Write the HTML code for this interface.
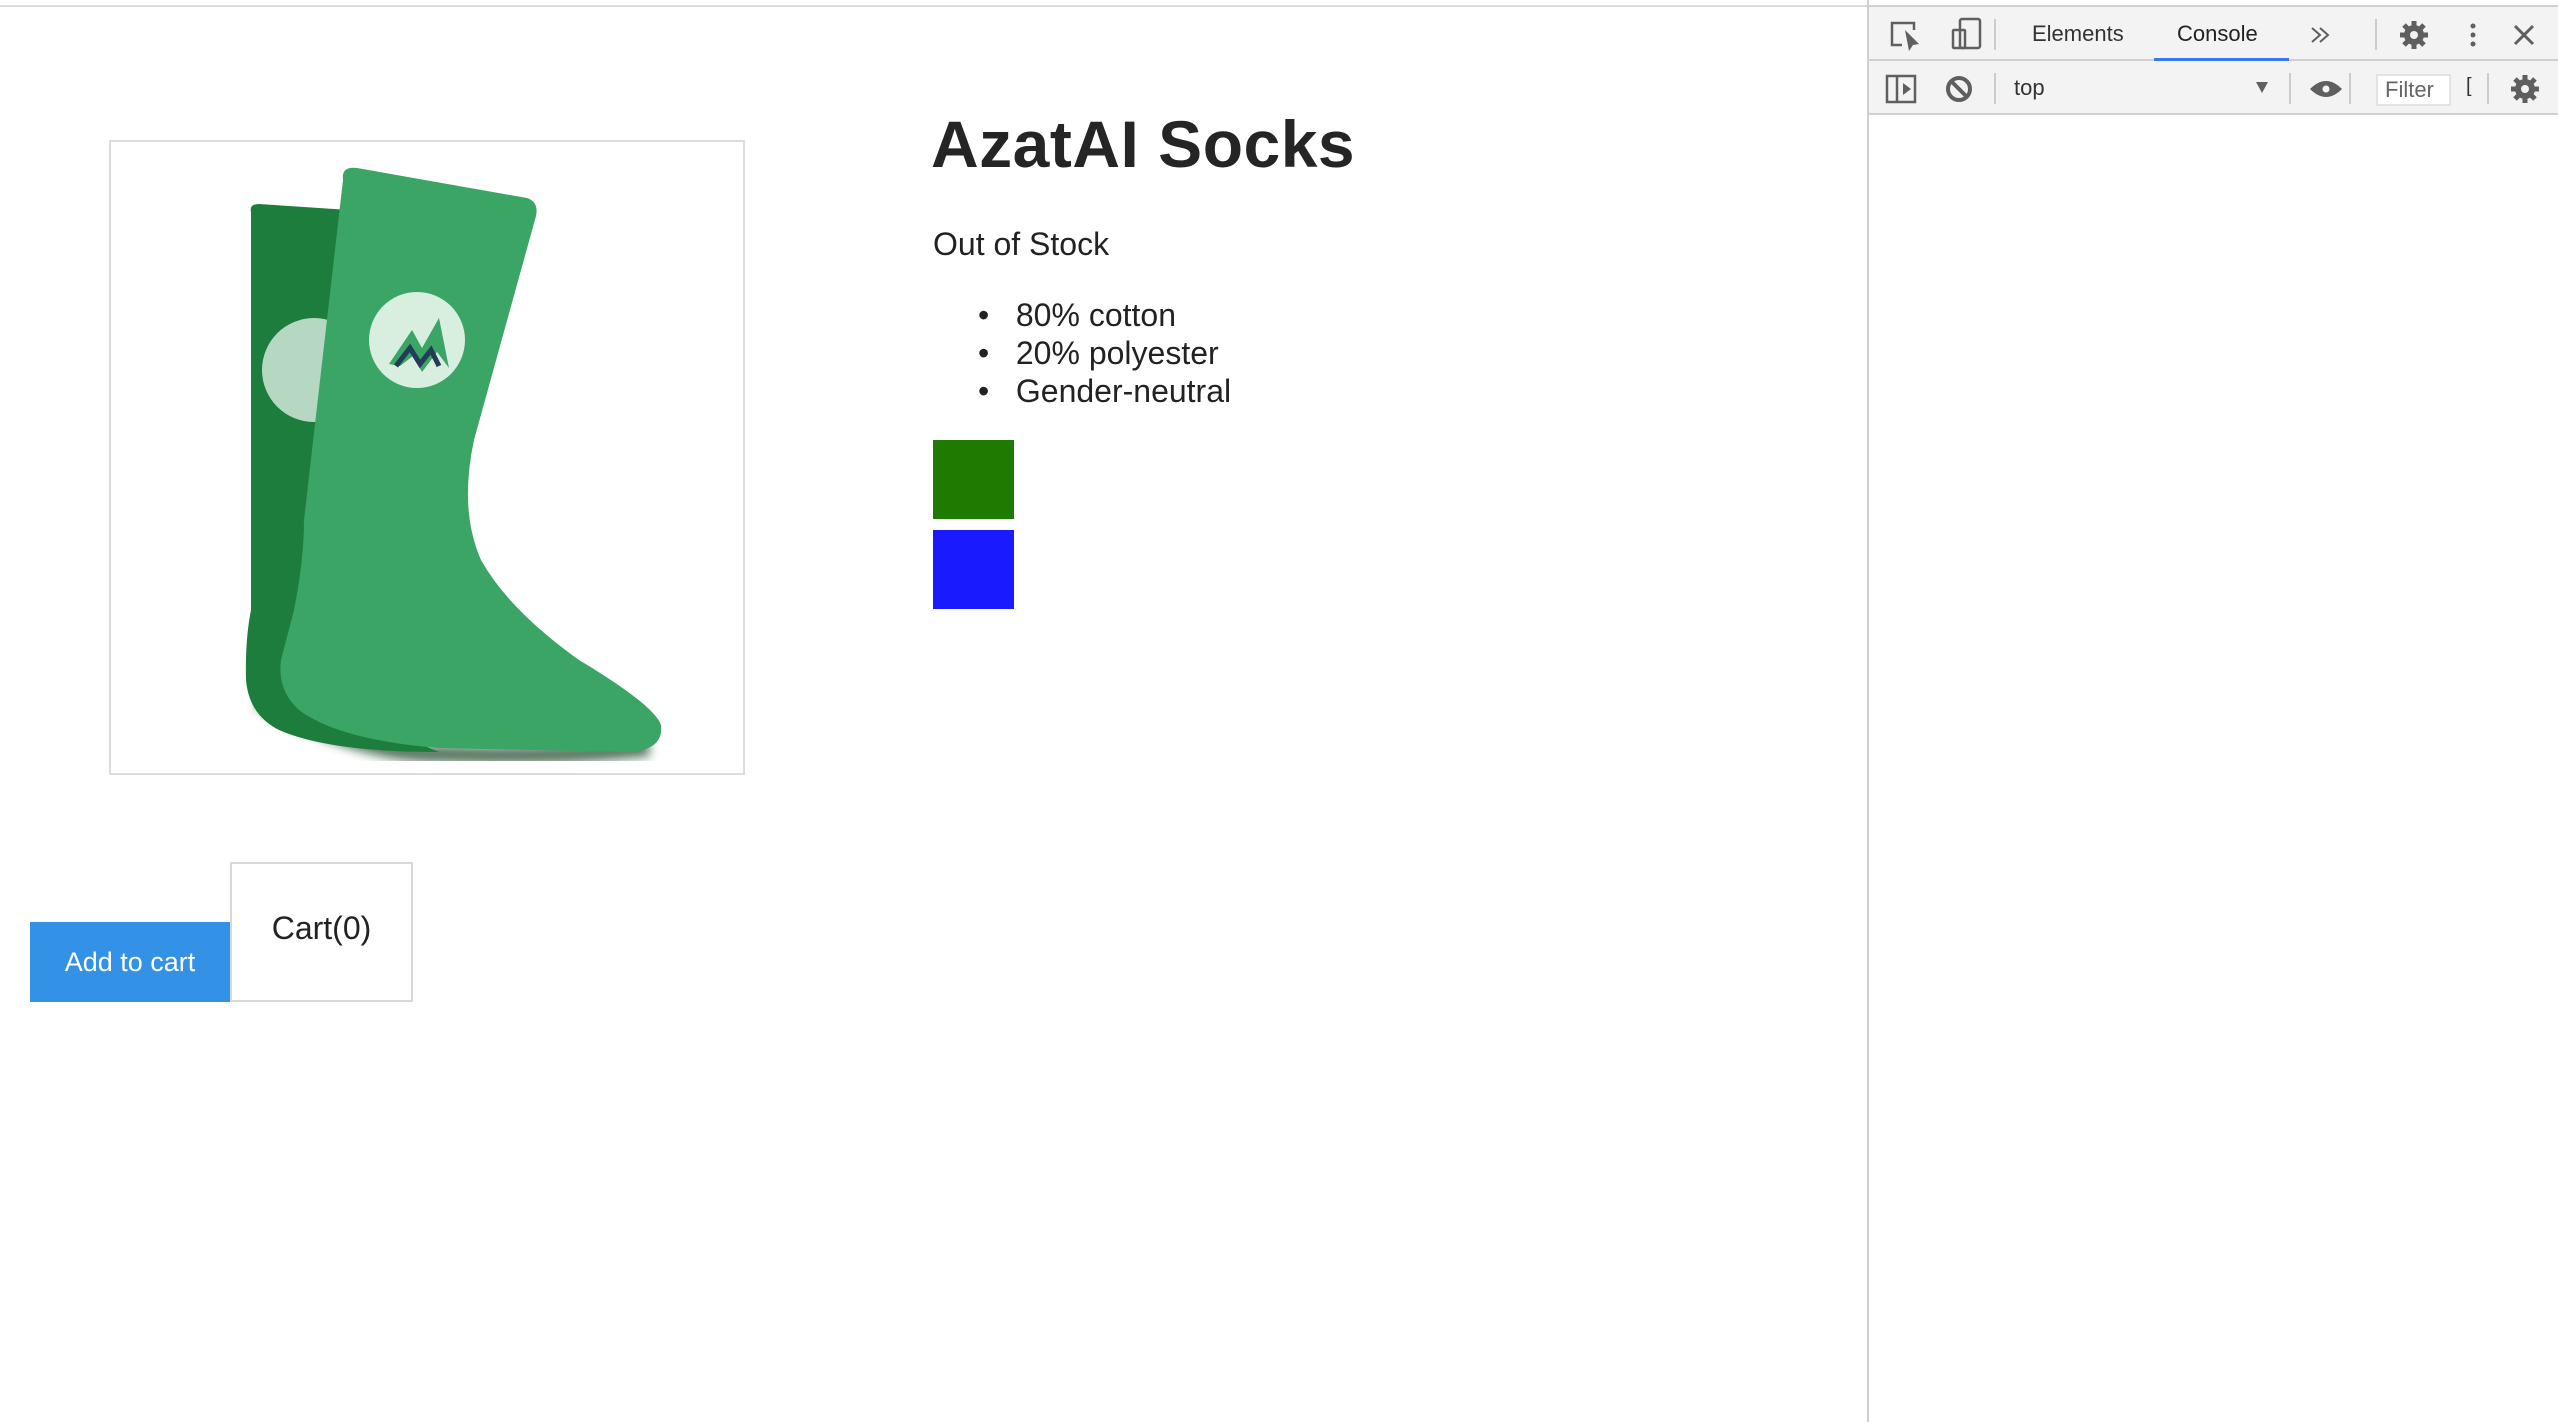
<!DOCTYPE html>
<html><head><meta charset="utf-8"><style>
body{margin:0;width:2558px;height:1422px;background:#fff;position:relative;overflow:hidden;font-family:"Liberation Sans",sans-serif;color:#222}
.a{position:absolute}
</style></head><body>
<div class="a" style="left:0;top:0;width:1869px;height:7px;border-bottom:2px solid #dcdcdc;box-sizing:border-box;background:#fff"></div>

<div class="a" style="left:109px;top:140px;width:636px;height:635px;border:2px solid #dadcdd;box-sizing:border-box;background:#fff"></div>
<svg class="a" style="left:109px;top:140px" width="636" height="635" viewBox="0 0 636 635">
<defs><filter id="s"><feGaussianBlur stdDeviation="5"/></filter></defs>
<path d="M150 560 Q250 615 330 614 Q460 618 540 608" stroke="#0b3a1b" stroke-width="16" fill="none" filter="url(#s)" opacity="0.7"/>
<path d="M142 72 Q140 64 150 64 L240 70 L220 560 Q300 600 330 612 Q220 612 170 590 Q140 575 137 540 Q136 500 142 470 Z" fill="#1d7d3c"/>
<circle cx="205" cy="230" r="52" fill="#c8e2d0" opacity="0.9"/>
<path d="M234 40 Q232 26 248 28 L418 58 Q430 62 427 76 L365 300 Q350 370 372 420 Q400 470 470 520 Q545 565 552 585 Q555 610 520 612 L330 608 Q230 600 190 570 Q168 550 172 520 L185 470 Q195 420 195 380 Z" fill="#3aa564"/>
<circle cx="308" cy="200" r="48" fill="#d8eedf"/>
<path d="M280 224 L303 190 L313 208 L330 178 L340 228 L328 212 L313 232 L304 216 L291 226 Z" fill="#3aa564"/>
<path d="M287 226 L301 208 L311 224 L322 210 L330 226" stroke="#253b5a" stroke-width="5" fill="none"/>
</svg>

<div class="a" style="left:931px;top:106px;font-size:66px;font-weight:bold;letter-spacing:0.5px;color:#252525;white-space:nowrap">AzatAI Socks</div>
<div class="a" style="left:933px;top:226px;font-size:32px;white-space:nowrap">Out of Stock</div>
<div class="a" style="left:978px;top:296px;font-size:32px;line-height:38px;white-space:nowrap">
<div>•&nbsp;&nbsp; 80% cotton</div><div>•&nbsp;&nbsp; 20% polyester</div><div>•&nbsp;&nbsp; Gender-neutral</div></div>
<div class="a" style="left:933px;top:440px;width:81px;height:79px;background:#1e7a00"></div>
<div class="a" style="left:933px;top:530px;width:81px;height:79px;background:#1a1aff"></div>

<div class="a" style="left:30px;top:922px;width:200px;height:80px;background:#3391e6;color:#fff;font-size:27px;line-height:80px;text-align:center">Add to cart</div>
<div class="a" style="left:230px;top:862px;width:183px;height:140px;border:2px solid #d6d9da;box-sizing:border-box;font-size:32px;line-height:128px;text-align:center;color:#222">Cart(0)</div>

<!-- devtools -->
<div class="a" style="left:1867px;top:0;width:691px;height:1422px;border-left:2px solid #d0d0d0;background:#fff"></div>
<div class="a" style="left:1869px;top:7px;width:689px;height:54px;background:#f3f3f3;border-bottom:2px solid #d0d0d0;box-sizing:border-box"></div>
<div class="a" style="left:1869px;top:61px;width:689px;height:54px;background:#f3f3f3;border-bottom:2px solid #d0d0d0;box-sizing:border-box"></div>
<div class="a" style="left:1869px;top:0;width:689px;height:7px;border-bottom:2px solid #d0d0d0;box-sizing:border-box"></div>
<svg class="a" style="left:1869px;top:0" width="689" height="120" viewBox="0 0 689 120" fill="none" stroke="#5f5f5f" stroke-width="2.5">
<path d="M33 45 H23 V23 H45 V30"/><path d="M36 30 L50 44 L44 45 L40 51 Z" fill="#5f5f5f" stroke="none"/>
<rect x="91" y="19" width="20" height="29" rx="2"/><rect x="84" y="30" width="12" height="18" rx="1"/>
<path d="M126 19 V50 M507 19 V50 M126 73 V104 M421 73 V104 M481 73 V104 M619 73 V104" stroke="#ccc" stroke-width="2"/>
<path d="M443 28 L451 35 L443 42 M451 28 L459 35 L451 42" stroke-width="2"/>
<path d="M664 26 L646 44 M646 26 L664 44" stroke-width="3"/>
<circle cx="604" cy="26" r="2.5" fill="#5f5f5f" stroke="none"/><circle cx="604" cy="35" r="2.5" fill="#5f5f5f" stroke="none"/><circle cx="604" cy="44" r="2.5" fill="#5f5f5f" stroke="none"/>
<g fill="#5f5f5f" stroke="none">
<circle cx="545" cy="35" r="10"/><circle cx="656" cy="89" r="10"/>
</g>
<g stroke="#5f5f5f" stroke-width="5">
<path d="M545 21 V49 M531 35 H559 M535 25 L555 45 M555 25 L535 45"/>
<path d="M656 75 V103 M642 89 H670 M646 79 L666 99 M666 79 L646 99"/>
</g>
<circle cx="545" cy="35" r="4" fill="#f3f3f3" stroke="none"/><circle cx="656" cy="89" r="4" fill="#f3f3f3" stroke="none"/>
<rect x="18" y="76" width="28" height="26"/><path d="M28 76 V102"/><path d="M34 83 L42 89 L34 95 Z" fill="#5f5f5f" stroke="none"/>
<circle cx="90" cy="89" r="11" stroke-width="4"/><path d="M82 81 L98 97" stroke-width="4"/>
<path d="M387 82 L399 82 L393 93 Z" fill="#5f5f5f" stroke="none"/>
<path d="M441 89 Q457 73 473 89 Q457 105 441 89 Z" fill="#5f5f5f" stroke="none"/><circle cx="457" cy="89" r="5" fill="#f3f3f3" stroke="#5f5f5f" stroke-width="3"/>
<rect x="508" y="75" width="73" height="30" fill="#fff" stroke="#ddd" stroke-width="1.5"/>
<path d="M21 130 L27 136 L21 142" stroke="#3b78e7" stroke-width="2.5"/>
<rect x="285" y="58" width="135" height="3" fill="#3b78e7" stroke="none"/>
</svg>
<div class="a" style="left:2032px;top:21px;font-size:22px;color:#333">Elements</div>
<div class="a" style="left:2177px;top:21px;font-size:22px;color:#222">Console</div>
<div class="a" style="left:2014px;top:75px;font-size:22px;color:#333">top</div>
<div class="a" style="left:2385px;top:77px;font-size:22px;color:#666">Filter</div>
<div class="a" style="left:2466px;top:75px;font-size:20px;color:#333">[</div>
</body></html>
